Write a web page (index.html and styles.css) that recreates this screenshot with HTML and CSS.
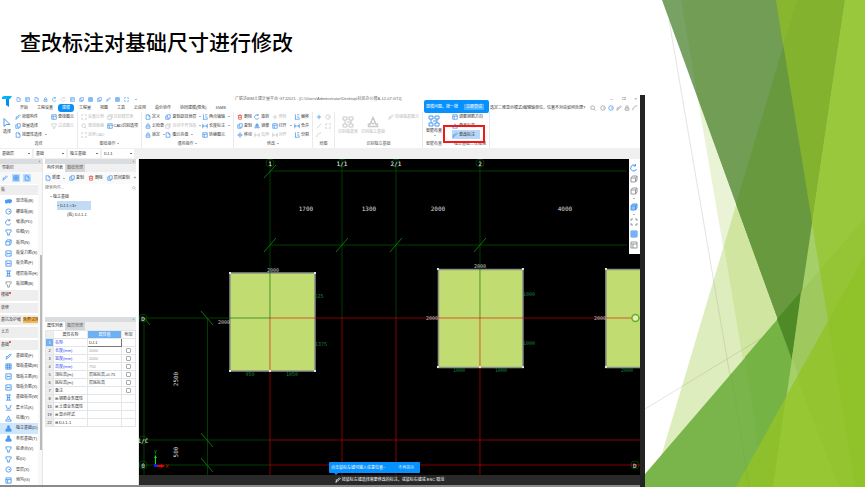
FILE: index.html
```html
<!DOCTYPE html>
<html lang="zh-CN">
<head>
<meta charset="utf-8">
<title>查改标注对基础尺寸进行修改</title>
<link rel="stylesheet" href="styles.css">
</head>
<body>
<svg class="symbols" aria-hidden="true">
  <symbol id="page" viewBox="0 0 8 8"><path d="M1.5 1h3.5l1.7 1.7V7H1.5z M5 1v2h1.7"/></symbol>
  <symbol id="copy" viewBox="0 0 8 8"><path d="M3 1h4v4.500H3z M3 2.500H1V7h4.500V5.500"/></symbol>
  <symbol id="box" viewBox="0 0 8 8"><path d="M1 1h6v6H1z M1 3h6 M3 3v4"/></symbol>
  <symbol id="grid" viewBox="0 0 8 8"><path d="M1 1h6v6H1z M1 3h6 M1 5h6 M3 1v6 M5 1v6"/></symbol>
  <symbol id="bar" viewBox="0 0 8 8"><path d="M1 1h6v6H1z M2.500 3v2 M5.500 3v2 M2.500 4h3"/></symbol>
  <symbol id="pen" viewBox="0 0 8 8"><path d="M1 7l1-2 4-4 1 1-4 4z M1 4h2"/></symbol>
  <symbol id="turn" viewBox="0 0 8 8"><path d="M6.500 5A3 3 0 1 1 5.500 1.600 M5.500 0v2h-2"/></symbol>
  <symbol id="move" viewBox="0 0 8 8"><path d="M4 1v6 M1 4h6 M3 2l1-1 1 1 M3 6l1 1 1-1 M2 3L1 4l1 1 M6 3l1 1-1 1"/></symbol>
  <symbol id="bin" viewBox="0 0 8 8"><path d="M1 2h6 M2 2v5h4V2 M3 1h2 M3.500 3.500v2 M4.700 3.500v2"/></symbol>
  <symbol id="lock" viewBox="0 0 8 8"><path d="M1.500 4h5v3h-5z M2.500 4V2.500a1.500 1.500 0 0 1 3 0V4 M4 5v1"/></symbol>
  <symbol id="dim" viewBox="0 0 8 8"><path d="M1 1v6 M7 1v6 M1 4h6 M2 3L1 4l1 1 M6 3l1 1-1 1"/></symbol>
  <symbol id="mirror" viewBox="0 0 8 8"><path d="M3.300 1v5.500H1z M4.700 1v5.500H7z"/></symbol>
  <symbol id="edge" viewBox="0 0 8 8"><path d="M1 1h1v6H1 M4 1h3 M4 4h3 M2 7h5V5"/></symbol>
  <symbol id="line" viewBox="0 0 8 8"><path d="M1 7l6-6"/></symbol>
  <symbol id="arc" viewBox="0 0 8 8"><path d="M1 7q0-5 6-6"/></symbol>
  <symbol id="ring" viewBox="0 0 8 8"><circle cx="4" cy="4" r="3"/><path d="M4 4h2"/></symbol>
  <symbol id="plus" viewBox="0 0 8 8"><path d="M4 1v6 M1 4h6"/></symbol>
  <symbol id="cap" viewBox="0 0 8 8"><path d="M1 1h6v2L5 4.500V7H3V4.500L1 3z"/></symbol>
  <symbol id="pile" viewBox="0 0 8 8"><path d="M4 1l2 4.500h1V7H1V5.500h1z M3 5h2"/></symbol>
  <symbol id="pit" viewBox="0 0 8 8"><path d="M1 1l1.500 4h3L7 1 M1 7h6"/></symbol>
  <symbol id="ibeam" viewBox="0 0 8 8"><path d="M1 1h6 M1 7h6 M2 4h4 M3 1v6 M5 1v6"/></symbol>
  <symbol id="foot" viewBox="0 0 8 8"><path class="solid" d="M3 1h2v3h1l1 1.500V7H1V5.500L2 4h1z"/></symbol>
  <symbol id="slab" viewBox="0 0 8 8"><path class="solid" d="M0 3q2-1.500 7-1l1 2-3 2-1-1-3 1z"/></symbol>
  <symbol id="cube" viewBox="0 0 8 8"><path d="M1 3h4.500v4H1z M1 3l1.500-2H7v4L5.500 7 M5.500 3L7 1"/></symbol>
  <symbol id="frame" viewBox="0 0 8 8"><path d="M1 3V1h2 M5 1h2v2 M7 5v2H5 M3 7H1V5"/></symbol>
  <symbol id="blocks" viewBox="0 0 12 12"><path d="M1 1h4v3H1z M7 1h4v3H7z M1 8h4v3H1z M7 8h4v3H7z M3 4v4 M9 4v4 M5 6h4"/></symbol>
  <symbol id="search" viewBox="0 0 8 8"><circle cx="3.500" cy="3.500" r="2.500"/><path d="M5.500 5.500L7.500 7.500"/></symbol>
</svg>

<main class="slide">
  <svg class="facets" viewBox="645 0 220 487" preserveAspectRatio="none" aria-hidden="true">
    <path fill="#eaf3d6" d="M681 0L764 487H865V0z"/>
    <path fill="#deedbd" d="M797 0L652 487H865V0z"/>
    <path fill="#cfe5a0" d="M724 246L764 487H865V0H797z"/>
    <path fill="none" stroke="#8a8f84" stroke-opacity=".3" stroke-width=".8" d="M669 20L749 487M645 409L865 275"/>
    <path fill="#78a263" d="M662 0H865V487H839L792 358z"/>
    <path fill="#719d54" d="M681 0H865V487H839L792 358L698 98z"/>
    <path fill="#68993e" d="M797 0H865V487H839L792 358L736 204z"/>
    <path fill="#83b22f" d="M776 0H865V487H855z"/>
    <path fill="#88b62f" d="M776 0H797L783 46z"/>
    <path fill="#7ab54c" d="M645 474L865 218V487H645z"/>
    <path fill="#76b345" d="M745 357L865 218V487H764z"/>
    <path fill="#4e8a26" d="M777 319L865 218V487H839z"/>
    <path fill="#a5cf68" d="M845 0H865V487H773z"/>
    <path fill="#9fc95f" d="M801 292L865 218V487H839L792 358z"/>
    <path fill="#99c83c" d="M845 0H865V487H855L812 223z"/>
    <path fill="#95c535" d="M820 270L865 218V487H855z"/>
    <path fill="#8dc02c" d="M736 487L865 255V487z"/>
    <path fill="#97c733" d="M786 397L865 255V487H773z"/>
    <path fill="#94c530" d="M797 378L865 255V487H839z"/>
    <path fill="#90c229" d="M828 322L865 255V487H855z"/>
    <path fill="none" stroke="#5f9f3b" stroke-opacity=".25" stroke-width=".8" d="M731 373L749 487"/>
  </svg>

  <h1 class="headline">查改标注对基础尺寸进行修改</h1>

  <section class="app">
    <header class="top">
      <svg class="logo" viewBox="0 0 10 11" aria-hidden="true"><path fill="#00b7f5" d="M0 1l2-1h8L8 3H0z"/><path fill="#078ef1" d="M4 3h3v8L4 9z"/></svg>
      <div class="titlebar">
        <div class="quick">
          <svg class="i"><use href="#page"/></svg><svg class="i"><use href="#box"/></svg><svg class="i"><use href="#page"/></svg><svg class="i"><use href="#lock"/></svg><svg class="i"><use href="#turn"/></svg><svg class="i off"><use href="#turn"/></svg><svg class="i"><use href="#box"/></svg><svg class="i"><use href="#copy"/></svg><svg class="i"><use href="#grid"/></svg><svg class="i"><use href="#copy"/></svg><svg class="i"><use href="#pen"/></svg><svg class="i"><use href="#grid"/></svg><svg class="i"><use href="#frame"/></svg><b class="caret"></b>
        </div>
        <span class="doc">广联达BIM土建计量平台 GTJ2021 - [C:\Users\Administrator\Desktop\社区办公楼A-12-07.GTJ]</span>
        <div class="window"><button aria-label="最小化">–</button><button aria-label="还原">❐</button><button aria-label="关闭">×</button></div>
      </div>
      <nav class="menu">
        <a href="#">开始</a><a href="#">工程设置</a><a href="#" class="current">建模</a><a href="#">工程量</a><a href="#">视图</a><a href="#">工具</a><a href="#">云应用</a><a href="#">造价协作</a><a href="#">协同建模(限免)</a><a href="#">IGMS</a>
        <div class="help">
          <input class="ask" aria-label="搜索" value="选定二维显示模式/编辑轴单位，位置不对应如何处理?">
          <svg class="i grey"><use href="#search"/></svg>
          <span class="account"><svg class="i grey"><use href="#ring"/></svg><svg class="i"><use href="#ring"/></svg><svg class="i grey"><use href="#pen"/></svg><svg class="i grey"><use href="#lock"/></svg><svg class="i grey"><use href="#arc"/></svg></span>
        </div>
      </nav>
      <div class="bubble"><span>建模问题，搜一搜</span><button>立即尝试</button></div>
    </header>

    <div class="ribbon">
      <section class="group">
        <div class="tools">
          <button class="big"><svg viewBox="0 0 8 10" class="arrow"><path d="M1 1v8l2.200-2L7 7z"/></svg>选择</button>
          <button><svg class="i"><use href="#pen"/></svg>拾取构件</button>
          <button><svg class="i"><use href="#copy"/></svg>批量选择</button>
          <button><svg class="i"><use href="#page"/></svg>按属性选择<b class="caret"></b></button>
          <button><svg class="i"><use href="#box"/></svg>查找图元</button>
          <button disabled><svg class="i"><use href="#cap"/></svg>过滤图元</button>
        </div>
        <h2>选择</h2>
      </section>
      <section class="group">
        <div class="tools">
          <button disabled><svg class="i"><use href="#frame"/></svg>设置比例</button>
          <button disabled><svg class="i"><use href="#search"/></svg>查找替换</button>
          <button disabled><svg class="i"><use href="#frame"/></svg>还原CAD</button>
          <button disabled><svg class="i"><use href="#cube"/></svg>识别楼层表</button>
          <button><svg class="i"><use href="#box"/></svg>CAD识别选项</button>
        </div>
        <h2>图纸操作<b class="caret"></b></h2>
      </section>
      <section class="group">
        <div class="tools">
          <button><svg class="i"><use href="#page"/></svg>定义</button>
          <button><svg class="i"><use href="#lock"/></svg>云检查</button>
          <button><svg class="i"><use href="#lock"/></svg>锁定<b class="caret"></b></button>
          <button><svg class="i"><use href="#copy"/></svg>复制到其他层<b class="caret"></b></button>
          <button disabled><svg class="i"><use href="#cube"/></svg>自动平齐顶板<b class="caret"></b></button>
          <button><svg class="i"><use href="#page"/></svg>图元存盘<b class="caret"></b></button>
          <button><svg class="i"><use href="#edge"/></svg>两点辅轴<b class="caret"></b></button>
          <button><svg class="i"><use href="#dim"/></svg>长度标注<b class="caret"></b></button>
          <button><svg class="i"><use href="#box"/></svg>转换图元</button>
        </div>
        <h2>通用操作<b class="caret"></b></h2>
      </section>
      <section class="group">
        <div class="tools">
          <button><svg class="i red"><use href="#bin"/></svg>删除</button>
          <button><svg class="i"><use href="#copy"/></svg>复制</button>
          <button><svg class="i"><use href="#move"/></svg>移动</button>
          <button><svg class="i"><use href="#turn"/></svg>旋转</button>
          <button><svg class="i"><use href="#mirror"/></svg>镜像</button>
          <button disabled><svg class="i"><use href="#dim"/></svg>延伸</button>
          <button disabled><svg class="i"><use href="#plus"/></svg>修剪</button>
          <button><svg class="i"><use href="#box"/></svg>打开<b class="caret"></b></button>
          <button disabled><svg class="i"><use href="#dim"/></svg>对齐</button>
          <button><svg class="i"><use href="#edge"/></svg>偏移</button>
          <button><svg class="i"><use href="#dim"/></svg>合并</button>
          <button><svg class="i"><use href="#edge"/></svg>分割</button>
        </div>
        <h2>修改<b class="caret"></b></h2>
      </section>
      <section class="group">
        <div class="tools">
          <button aria-label="点"><svg class="i"><use href="#plus"/></svg></button>
          <button aria-label="直线" disabled><svg class="i"><use href="#line"/></svg></button>
          <button aria-label="弧" disabled><svg class="i"><use href="#arc"/></svg></button>
          <button aria-label="圆" disabled><svg class="i"><use href="#ring"/></svg></button>
          <button aria-label="矩形" disabled><svg class="i"><use href="#frame"/></svg></button>
        </div>
        <h2>绘图</h2>
      </section>
      <section class="group">
        <div class="tools">
          <button class="big" disabled><svg class="large"><use href="#blocks"/></svg>识别独基表</button>
          <button class="big" disabled><svg class="large"><use href="#pile"/></svg>识别独立基础</button>
          <button disabled><svg class="i"><use href="#pen"/></svg>校核独基图元</button>
        </div>
        <h2>识别独立基础</h2>
      </section>
      <section class="group last">
        <div class="tools">
          <button class="big"><svg class="large"><use href="#blocks"/></svg>智能布置<b class="caret"></b></button>
          <button><svg class="i"><use href="#box"/></svg>调整钢筋方向</button>
          <button><svg class="i"><use href="#pile"/></svg>查改标高</button>
          <button class="picked"><svg class="i"><use href="#pen"/></svg>查改标注</button>
        </div>
        <h2><span>智能布置</span><span>独立基础二次编辑</span></h2>
      </section>
    </div>

    <div class="pickers">
      <select aria-label="楼层"><option>基础层</option></select>
      <select aria-label="类别"><option>基础</option></select>
      <select aria-label="构件类型"><option>独立基础</option></select>
      <select aria-label="构件"><option>DJ-1</option></select>
    </div>

    <div class="work">
      <aside class="nav">
        <div class="strip">‹</div>
        <h2 class="navtitle">导航栏</h2>
        <div class="modes"><svg class="i"><use href="#pen"/></svg><svg class="i on"><use href="#grid"/></svg><svg class="i on"><use href="#page"/></svg></div>
        <div class="navlist">
          <h3>板</h3>
          <a href="#"><svg class="i"><use href="#slab"/></svg>现浇板(B)</a>
          <a href="#"><svg class="i"><use href="#ring"/></svg>螺旋板(B)</a>
          <a href="#"><svg class="i"><use href="#turn"/></svg>坡道(PD)</a>
          <a href="#"><svg class="i"><use href="#cap"/></svg>柱帽(V)</a>
          <a href="#"><svg class="i"><use href="#cube"/></svg>板洞(N)</a>
          <a href="#"><svg class="i"><use href="#bar"/></svg>板受力筋(S)</a>
          <a href="#"><svg class="i"><use href="#bar"/></svg>板负筋(F)</a>
          <a href="#"><svg class="i"><use href="#ibeam"/></svg>楼层板带(H)</a>
          <a href="#"><svg class="i grey"><use href="#cap"/></svg>板加腋(B)</a>
          <h3 class="new">楼梯</h3>
          <h3>装修</h3>
          <h3>基坑及护坡<mark>免费试用</mark></h3>
          <h3>土方</h3>
          <h3 class="new">基础</h3>
          <a href="#"><svg class="i"><use href="#pen"/></svg>基础梁(F)</a>
          <a href="#"><svg class="i"><use href="#grid"/></svg>筏板基础(M)</a>
          <a href="#"><svg class="i"><use href="#bar"/></svg>筏板主筋(R)</a>
          <a href="#"><svg class="i"><use href="#bar"/></svg>筏板负筋(X)</a>
          <a href="#"><svg class="i"><use href="#ibeam"/></svg>基础板带(W)</a>
          <a href="#"><svg class="i"><use href="#pit"/></svg>集水坑(K)</a>
          <a href="#"><svg class="i"><use href="#pile"/></svg>柱墩(Y)</a>
          <a href="#" class="current"><svg class="i"><use href="#foot"/></svg>独立基础(D)</a>
          <a href="#"><svg class="i"><use href="#foot"/></svg>条形基础(T)</a>
          <a href="#"><svg class="i"><use href="#cap"/></svg>桩承台(V)</a>
          <a href="#"><svg class="i"><use href="#cap"/></svg>桩(U)</a>
          <a href="#"><svg class="i"><use href="#ring"/></svg>垫层(X)</a>
          <a href="#"><svg class="i"><use href="#box"/></svg>地沟(G)</a>
        </div>
      </aside>

      <div class="side">
        <section class="parts">
          <div class="strip">‹</div>
          <div class="tabs"><button class="open">构件列表</button><button>图纸管理</button></div>
          <div class="actions">
            <button><svg class="i"><use href="#page"/></svg>新建<b class="caret"></b></button>
            <button><svg class="i"><use href="#copy"/></svg>复制</button>
            <button><svg class="i red"><use href="#bin"/></svg>删除</button>
            <button><svg class="i"><use href="#copy"/></svg>层间复制</button>
            <button aria-label="更多">»</button>
          </div>
          <div class="find"><input placeholder="搜索构件..." aria-label="搜索构件"><svg class="i grey"><use href="#search"/></svg></div>
          <ul class="tree">
            <li><b class="caret"></b>独立基础
              <ul><li><span class="sel"><b class="caret"></b>DJ-1 &lt;3&gt;</span>
                <ul><li>(底) DJ-1-1</li></ul></li></ul></li>
          </ul>
        </section>
        <section class="props">
          <div class="strip">‹</div>
          <div class="tabs"><button class="open">属性列表</button><button>图层管理</button></div>
          <table>
            <thead><tr><th></th><th>属性名称</th><th class="value">属性值</th><th>附加</th></tr></thead>
            <tbody>
              <tr class="active"><th>1</th><td class="key">名称</td><td class="edit">DJ-1</td><td></td></tr>
              <tr><th>2</th><td class="key">长度(mm)</td><td class="dim">2000</td><td><input type="checkbox" aria-label="附加长度"></td></tr>
              <tr><th>3</th><td class="key">宽度(mm)</td><td class="dim">2000</td><td><input type="checkbox" aria-label="附加宽度"></td></tr>
              <tr><th>4</th><td class="key">高度(mm)</td><td class="dim">750</td><td><input type="checkbox" aria-label="附加高度"></td></tr>
              <tr><th>5</th><td>顶标高(m)</td><td>层底标高+0.75</td><td><input type="checkbox" aria-label="附加顶标高"></td></tr>
              <tr><th>6</th><td>底标高(m)</td><td>层底标高</td><td><input type="checkbox" aria-label="附加底标高"></td></tr>
              <tr><th>7</th><td>备注</td><td></td><td><input type="checkbox" aria-label="附加备注"></td></tr>
              <tr><th>8</th><td>⊞ 钢筋业务属性</td><td></td><td></td></tr>
              <tr><th>15</th><td>⊞ 土建业务属性</td><td></td><td></td></tr>
              <tr><th>19</th><td>⊞ 显示样式</td><td></td><td></td></tr>
              <tr><th>22</th><td>⊞ DJ-1-1</td><td></td><td></td></tr>
            </tbody>
          </table>
        </section>
      </div>

      <section class="stage">
        <svg class="drawing" viewBox="139 159 501 316" preserveAspectRatio="none">
          <g fill="#c1dc70" stroke="#8d9289" stroke-width="1.500">
            <path d="M230 273h85v98h-85z M438.500 269.500h84.500v98h-84.500z M642 269.500h-36v98h36"/>
          </g>
          <g class="green">
            <path d="M270 159v159 M342 159v159 M396 159v159 M480 159v159 M270 171h357 M270 245h357 M139 318h131 M139 440h131 M139 465h131 M144 318v157 M207.500 318v157"/>
            <path class="tick" d="M264 178l12-13 M264 252l12-14 M336 252l12-14 M390 252l12-14 M474 252l12-14 M201 311l12 14 M201 433l12 14 M201 458l12 14 M144 318l6 7"/>
            <g><circle cx="270" cy="163" r="4"/><circle cx="342" cy="163" r="4"/><circle cx="396" cy="163" r="4"/><circle cx="480" cy="163" r="4"/><circle cx="143" cy="318" r="4"/><circle cx="143" cy="440" r="4"/><circle cx="143" cy="465" r="4"/><circle cx="635" cy="465" r="4"/></g>
          </g>
          <path class="redlines" d="M270 318v157 M342 318v157 M396 318v157 M480 318v157 M270 318h370 M270 440h370 M270 465h370"/>
          <circle cx="635.500" cy="318" r="3.500" fill="#e4eeb5" stroke="#62b326" stroke-width="1.500"/>
          <g fill="#e4e4e4"><path d="M229 272h2v2h-2z M314 272h2v2h-2z M229 370h2v2h-2z M314 370h2v2h-2z M437 268h2v2h-2z M522 268h2v2h-2z M437 366h2v2h-2z M522 366h2v2h-2z M605 268h2v2h-2z M605 366h2v2h-2z M269 370h2v2h-2z M479 366h2v2h-2z"/></g>
          <g class="span"><text x="306" y="211">1700</text><text x="369" y="211">1300</text><text x="438" y="211">2000</text><text x="565" y="211">4000</text><text transform="translate(178 379) rotate(-90)">2500</text><text transform="translate(178 452) rotate(-90)">500</text></g>
          <g class="axis"><text x="270" y="166">1</text><text x="342" y="166">1/1</text><text x="396" y="166">2/1</text><text x="480" y="166">2</text><text x="143" y="321">D</text><text x="143" y="443">1/C</text><text x="143" y="468">0</text><text x="635" y="468">D</text></g>
          <g class="size"><text x="273" y="272">2000</text><text x="224" y="324">2000</text><text x="480" y="268">2000</text><text x="432" y="320">2000</text><text x="600" y="320">2000</text></g>
          <g class="offset"><text x="319" y="298">625</text><text x="321" y="346">1375</text><text x="250" y="376">950</text><text x="292" y="376">1050</text><text x="529" y="296">1000</text><text x="529" y="345">1000</text><text x="459" y="372">1000</text><text x="501" y="372">1000</text><text x="627" y="372">2000</text></g>
          <path fill="#00e81a" d="M155 464v-6h-1l1.500-3 1.500 3h-1v6z"/><path fill="#f00000" d="M157 465h4v-1l4 2-4 2v-1h-4z"/><path fill="#0020ff" d="M154 464h3v3h-3z"/>
          <text class="mark" x="155.500" y="454" fill="#00b81a">Y</text><text class="mark" x="167" y="468" fill="#e00000">X</text>
        </svg>
        <div class="views">
          <svg class="v"><use href="#turn"/></svg><svg class="v grey"><use href="#cube"/></svg><svg class="v grey"><use href="#cube"/></svg><b class="caret"></b><svg class="v strong"><use href="#cube"/></svg><b class="caret"></b><svg class="v grey"><use href="#frame"/></svg><svg class="v"><use href="#grid"/></svg><svg class="v grey"><use href="#box"/></svg>
        </div>
        <div class="tip"><span>点击鼠标左键可输入任意位置~</span><button>不再提示</button></div>
        <footer class="status"><svg class="i"><use href="#pen"/></svg>按鼠标左键选择需要修改的标注，或鼠标右键或 ESC 取消</footer>
      </section>
    </div>
  </section>
</main>
</body>
</html>
```
FILE: styles.css
```css
* { box-sizing: border-box; }
body { margin: 0; background: #fff; color: #333; font: 4px/6px "Liberation Sans", "Noto Sans CJK SC", sans-serif; }
h1, h2, h3, ul { margin: 0; padding: 0; font-weight: normal; font-size: inherit; list-style: none; }
button, input, select { margin: 0; padding: 0; border: 0; background: none; color: inherit; font: inherit; white-space: nowrap; }
a { color: inherit; text-decoration: none; }
.symbols { position: absolute; width: 0; height: 0; }
symbol { overflow: visible; }

.i { flex: none; width: 6px; height: 6px; }
.i, .v, .large, .arrow { fill: none; stroke: #4b98ee; stroke-width: 1; }
.solid { fill: #4b98ee; }
.grey { stroke: #96999e; }
.red { stroke: #e55a5a; }
.off { stroke: #ccc; }
.caret { display: inline-block; flex: none; margin-left: 2px; border: 1px solid transparent; border-top-color: #666; border-bottom: 0; }

.slide { position: relative; display: flex; flex-direction: column; min-height: 100vh; overflow: hidden; }
.facets { position: absolute; top: 0; right: 0; width: 25.440%; height: 100%; }
.headline { position: relative; height: 95px; padding: 25px 0 0 20px; color: #000; font: 500 21px/32px "Noto Sans CJK SC", sans-serif; }

.app { position: relative; flex: 1; display: flex; flex-direction: column; width: 74.560%; border-right: 5px solid #242424; background: #fff; }
.top { position: relative; display: grid; grid-template: 8px 9px / 16px minmax(0, 1fr); }
.logo { grid-row: span 2; width: 10px; height: 11px; margin: 1px 0 0 2px; }
.titlebar { display: grid; grid-template-columns: 219px 1fr auto; align-items: center; white-space: nowrap; }
.quick { display: flex; align-items: center; gap: 4px; }
.quick .i { width: 5px; height: 5px; }
.doc { color: #666; }
.window { display: flex; gap: 9px; padding-right: 3px; }
.menu { display: flex; align-items: center; gap: 9px; padding-left: 4px; white-space: nowrap; }
.menu .current { margin: 0 -4px; padding: 0 4px; border-radius: 3px; background: #0a8ff5; color: #fff; line-height: 8px; }
.help { flex: 1; display: flex; align-items: center; justify-content: flex-end; gap: 4px; padding-right: 2px; }
.ask { width: 96px; }
.account { display: flex; gap: 2px; }
.bubble { position: absolute; top: 5px; left: 66.250%; z-index: 2; display: flex; align-items: center; gap: 6px; height: 13px; padding: 0 5px 0 2px; border-radius: 2px; background: #0791ff; color: #fff; white-space: nowrap; }
.bubble button { padding: 0 2px; background: #4aaeff; }

.ribbon { display: grid; grid-template-columns: 78fr 64fr 92fr 79fr 22fr 88fr 67fr 150fr; height: 36px; }
.group { min-width: 0; border-right: 1px solid #eaeaea; }
.group h2 { display: flex; justify-content: center; align-items: center; height: 9px; color: #555; white-space: nowrap; }
.tools { display: grid; grid-template-rows: repeat(3, 9px); grid-auto-flow: column; grid-auto-columns: max-content; justify-content: space-between; padding: 0 3px; }
.tools button { display: flex; align-items: center; gap: 1px; }
.tools .big { grid-row: span 3; flex-direction: column; justify-content: center; }
.tools button:disabled { color: #bbb; }
.tools button:disabled svg { stroke: #c8c8c8; }
.large { width: 12px; height: 12px; }
.arrow { width: 8px; height: 11px; }
.last .tools { justify-content: start; gap: 0 10px; }
.last h2 { justify-content: space-between; padding: 0 3px; }
.tools .picked { position: relative; width: 28px; background: #b9d7f6; }
.picked::after { content: ""; position: absolute; inset: -5px -5px -4px -9px; border: 2px solid #f01818; }

.pickers { display: flex; gap: 2px; height: 11px; padding: 1px 0; background: #f0f0f0; }
.pickers select { width: 32px; padding: 0 2px; appearance: none; background: linear-gradient(#777, #777) 28px 4px / 2px 1px no-repeat #fff; }

.work { flex: 1; display: grid; grid-template-columns: 42px 95px minmax(0, 1fr); gap: 1px; background: #e6e6e6; border-bottom: 2px solid #8a8a8a; }
.strip { height: 5px; padding-right: 2px; background: #d9dde0; line-height: 5px; text-align: right; }
.nav { display: flex; flex-direction: column; background: linear-gradient(#b9b9b9, #b9b9b9) 40px 96px / 2px 195px no-repeat #f8f8f8; }
.navtitle { height: 8px; padding-left: 2px; background: #f0f0f0; line-height: 8px; }
.modes { display: flex; align-items: center; gap: 3px; height: 12px; padding-left: 1px; }
.modes .i { width: 8px; height: 8px; padding: 1px; }
.modes .on { background: #b9dcff; }
.navlist { flex: 1; display: flex; flex-direction: column; width: 38px; background: #fff; white-space: nowrap; }
.navlist > * { flex: 1; display: flex; align-items: center; overflow: hidden; }
.navlist a { gap: 4px; padding-left: 5px; }
.navlist .i { width: 7px; height: 7px; }
.navlist h3 { padding-left: 1px; border: 1px solid #fff; border-width: 1px 0; background: #eee; }
.navlist .current { background: #cfe7fd; }
.navlist .new::after { content: ""; width: 2px; height: 2px; margin-bottom: 5px; border-radius: 1px; background: #f22; }
.navlist mark { margin-left: 2px; background: #f5b95c; color: #5e3a00; }

.side { display: grid; grid-template-rows: 158px 1fr; background: #fff; }
.parts, .props { min-width: 0; padding: 0 2px 0 2px; }
.tabs { display: flex; height: 8px; background: #f0f0f0; }
.tabs button { padding: 0 2px; background: #d6d6d6; color: #666; }
.tabs .open { background: #fff; color: #222; }
.actions { display: flex; align-items: center; justify-content: space-between; height: 12px; background: #fafafa; }
.actions button { display: flex; align-items: center; gap: 1px; }
.find { display: flex; align-items: center; justify-content: space-between; height: 8px; }
.find .i { width: 4px; height: 4px; }
.find input { width: 80px; }
.tree li { padding-left: 5px; line-height: 9px; }
.tree .caret { margin: 0 1px 1px 0; }
.tree .sel { display: inline-block; width: 34px; margin-left: 2px; background: #c1dbf5; }
.tree ul ul { padding-left: 7px; }
.props table { width: 100%; border-collapse: collapse; table-layout: fixed; line-height: 5px; white-space: nowrap; }
.props th, .props td { height: 8px; padding: 0 1px; border: 1px solid #e3e6e9; font-weight: normal; text-align: left; }
.props thead th { text-align: center; }
.props th:first-child { width: 8px; background: #eee; text-align: center; }
.props th:nth-child(2) { width: 34px; }
.props th:last-child { width: 14px; }
.props .value, .props .active th { background: #6db1f4; color: #fff; }
.props .key { color: #3048f0; }
.props .dim { color: #999; }
.props .edit { border-color: #777; }
.props td:last-child { text-align: center; }
.props input { display: block; appearance: none; width: 5px; height: 5px; margin: 0 auto; border: 1px solid #aaa; border-radius: 1px; background: #fff; }

.stage { position: relative; display: grid; grid-template-rows: minmax(0, 1fr) 10px; min-height: 0; background: #000; }
.drawing { width: 100%; height: 100%; }
.drawing text { font-family: "DejaVu Sans Mono", monospace; text-anchor: middle; stroke: none; }
.green { fill: none; stroke: #006400; stroke-opacity: .6; stroke-width: 1; }
.tick { stroke: #087508; stroke-opacity: 1; }
.redlines { fill: none; stroke: #e00000; stroke-opacity: .6; stroke-width: 1; }
.span { fill: #ddd; font-size: 6px; }
.axis { fill: #eee; font-size: 6px; }
.size { fill: #ccc; font-size: 5px; }
.offset { fill: #168044; font-size: 5px; }
.mark { font-size: 5px; }
.views { position: absolute; top: 0; right: 0; display: flex; flex-direction: column; align-items: center; justify-content: space-between; width: 11px; height: 95px; padding: 5px 0; background: #fff; }
.views .caret { margin: 0; }
.v { width: 8px; height: 8px; }
.strong { fill: #8fc3fa; }
.tip { position: absolute; bottom: 12px; left: 37.920%; display: flex; align-items: center; gap: 13px; height: 11px; padding: 0 6px 0 2px; border-radius: 1px; background: #0791ff; color: #fff; white-space: nowrap; }
.tip::after { content: ""; position: absolute; top: 11px; left: 5px; border: 2px solid transparent; border-top-color: #0791ff; border-bottom: 0; }
.tip button { color: #cce7ff; }
.status { display: flex; align-items: center; justify-content: center; gap: 1px; background: #292929; color: #fff; }
.status .i { stroke: #fff; }
```
